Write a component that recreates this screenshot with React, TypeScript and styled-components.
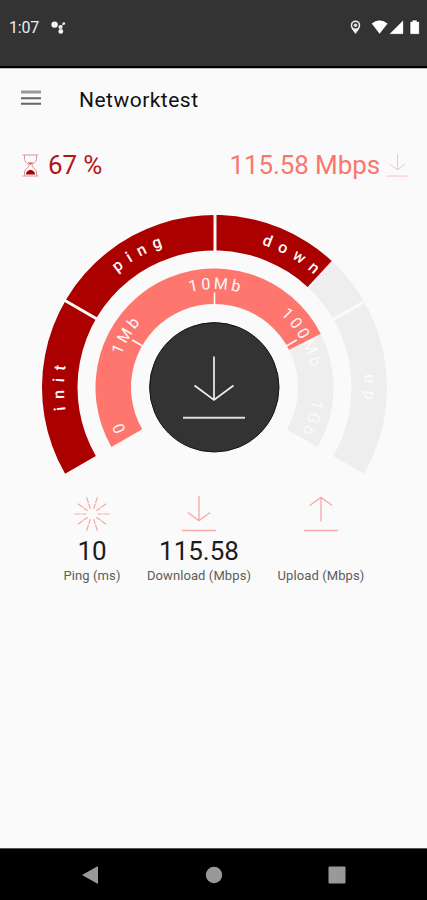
import React from "react";
import styled, { createGlobalStyle } from "styled-components";

const GlobalStyle = createGlobalStyle`
  * { box-sizing: border-box; }
  body { margin: 0; background: #fafafa; font-family: Roboto, "Liberation Sans", sans-serif; }
`;

const CRIMSON = "#ab0000";
const CORAL = "#ff766e";
const TRACK = "#eeeeee";

const Screen = styled.div`
  width: 427px;
  height: 900px;
  display: flex;
  flex-direction: column;
  overflow: hidden;
  background: #fafafa;
`;

const StatusBar = styled.header`
  height: 68px;
  flex: none;
  display: flex;
  align-items: flex-start;
  padding: 17px 7px 0 9px;
  background: #333;
  border-bottom: 2px solid #000;
  box-shadow: 0 1px 0 #bbb;
  color: #eee;
`;

const Clock = styled.span`
  width: 41px;
  font-size: 16px;
  line-height: 22px;
  letter-spacing: -0.2px;
`;

const StatusIcons = styled.div`
  margin-left: auto;
  display: flex;
`;

const AppBar = styled.div`
  height: 64px;
  flex: none;
  display: flex;
  align-items: center;
  padding: 0 21px;
  gap: 38px;
`;

const Title = styled.h1`
  margin: 0;
  font-size: 21px;
  line-height: 28px;
  font-weight: 400;
  letter-spacing: 0.48px;
  color: #111;
`;

const Summary = styled.div`
  height: 66px;
  flex: none;
  display: flex;
  justify-content: space-between;
  align-items: center;
  padding: 0 18px 0 22px;
`;

const Reading = styled.div<{ $color: string; $gap: number }>`
  display: flex;
  align-items: center;
  gap: ${(p) => p.$gap}px;
  font-size: 26px;
  line-height: 32px;
  letter-spacing: -0.1px;
  color: ${(p) => p.$color};
`;

const Dial = styled.svg`
  display: block;
  flex: none;
`;

const RingLabel = styled.text<{ $spacing: number }>`
  font-family: Roboto, sans-serif;
  font-size: 16px;
  letter-spacing: ${(p) => p.$spacing}px;
  fill: #fafafa;
`;

const Results = styled.div`
  display: grid;
  grid-template-columns: 86px 128px 116px;
  padding: 8px 0 0 49px;
`;

const Result = styled.div`
  display: flex;
  flex-direction: column;
  align-items: center;
`;

const ResultIcon = styled.div`
  height: 39px;
  svg {
    display: block;
  }
`;

const ResultValue = styled.div`
  height: 32px;
  font-size: 26px;
  line-height: 32px;
  color: #1c1c1c;
`;

const ResultLabel = styled.div`
  margin-top: 1px;
  font-size: 13px;
  line-height: 16px;
  letter-spacing: 0.1px;
  white-space: nowrap;
  color: #5c5c5c;
`;

const NavBar = styled.nav`
  height: 52px;
  flex: none;
  margin-top: auto;
  display: flex;
  justify-content: center;
  align-items: center;
  gap: 105px;
  background: #000;
  border-top: 1px solid #555;
`;

const C = 172.5;

function polar(r: number, deg: number) {
  const a = (deg * Math.PI) / 180;
  return `${(C + r * Math.sin(a)).toFixed(2)} ${(C - r * Math.cos(a)).toFixed(2)}`;
}

function band(inner: number, outer: number, from: number, to: number) {
  const large = to - from > 180 ? 1 : 0;
  return `M${polar(outer, from)}A${outer} ${outer} 0 ${large} 1 ${polar(outer, to)}L${polar(inner, to)}A${inner} ${inner} 0 ${large} 0 ${polar(inner, from)}Z`;
}

type LabelData = { text: string; angle: number };

const phases: LabelData[] = [
  { text: "init", angle: -90 },
  { text: "ping", angle: -30 },
  { text: "down", angle: 30 },
  { text: "up", angle: 90 },
];

const scale: LabelData[] = [
  { text: "0", angle: -113.3 },
  { text: "1Mb", angle: -60 },
  { text: "10Mb", angle: 0 },
  { text: "100Mb", angle: 60 },
  { text: "1Gb", angle: 107 },
];

function Gauge() {
  return (
    <Dial width="427" height="290" viewBox="-42 -17 427 290">
      <defs>
        <path id="phase-line" d={`M${polar(150.5, -90)}A150.5 150.5 0 0 1 ${polar(150.5, 90)}`} />
        <path id="scale-line" d={`M${polar(98.5, -90)}A98.5 98.5 0 0 1 ${polar(98.5, 90)}`} />
      </defs>
      <path d={band(137, 172.5, -120, 120)} fill={TRACK} />
      <path d={band(137, 172.5, -120, 42.8)} fill={CRIMSON} />
      <path d={band(83.5, 119, -120, 120)} fill={TRACK} />
      <path d={band(83.5, 119, -120, 63.2)} fill={CORAL} />
      {[-60, 0, 60].map((a) => (
        <g key={a} transform={`rotate(${a} ${C} ${C})`} stroke="#fafafa">
          <path d={`M${C + 0.5} -1V36.5`} strokeWidth="3" />
          <path d={`M${C} 77.5V94`} strokeWidth="1.6" />
        </g>
      ))}
      {phases.map((l) => (
        <g key={l.text} transform={`rotate(${l.angle + 1.2} ${C} ${C})`}>
          <RingLabel $spacing={7.4} textAnchor="middle" fontWeight={500}>
            <textPath href="#phase-line" startOffset="50%">{l.text}</textPath>
          </RingLabel>
        </g>
      ))}
      {scale.map((l) => (
        <g key={l.text} transform={`rotate(${l.angle + 0.9} ${C} ${C})`}>
          <RingLabel $spacing={3} textAnchor="middle">
            <textPath href="#scale-line" startOffset="50%">{l.text}</textPath>
          </RingLabel>
        </g>
      ))}
      <circle cx="172.3" cy="172.3" r="64.7" fill="#333" stroke="#111" strokeWidth="1" />
      <path d="M172 141.5V185M152.5 170.5L172 185L191.5 170.5" fill="none" stroke="#eee" strokeWidth="1.7" />
      <path d="M141 202.7H203" stroke="#ddd" strokeWidth="2" />
    </Dial>
  );
}

function Burst() {
  return (
    <svg width="36" height="36" viewBox="-18 -18 36 36" fill="none" stroke="#f7a6a2" strokeWidth="1.2">
      {Array.from({ length: 10 }, (_, i) => (
        <path key={i} d="M5.5 0H10.5M11.3 0H17.5" transform={`rotate(${i * 36})`} />
      ))}
    </svg>
  );
}

function Transfer({ up, size = 36, color = "#f9aaa6" }: { up?: boolean; size?: number; color?: string }) {
  return (
    <svg width={size} height={size} viewBox="0 0 36 36" fill="none" stroke={color} strokeWidth="1.3">
      <path d={up ? "M18 25.5V1M6.8 9.5L18 1.4L29.2 9.5" : "M18 0V25M6.8 16.5L18 24.6L29.2 16.5"} />
      <path d="M1 34.5H35" />
    </svg>
  );
}

function Hourglass() {
  return (
    <svg width="17" height="23" viewBox="0 0 17 23" fill="none" stroke="#d6989c" strokeWidth="1">
      <path d="M0.5 1H16.5M0.5 22H16.5" />
      <path d="M2.5 1V5.5C2.5 8.5 7 9 7 11.5C7 14 2.5 14.5 2.5 18V22M14.5 1V5.5C14.5 8.5 10 9 10 11.5C10 14 14.5 14.5 14.5 18V22" />
      <path d="M5.5 8.6H11.5L8.5 11Z" fill="#c86468" stroke="none" />
      <path d="M4 20.5C4 17.5 6.5 16 8.5 16S13 17.5 13 20.5Z" fill={CRIMSON} stroke="none" />
    </svg>
  );
}

export default function App() {
  return (
    <>
      <GlobalStyle />
      <Screen>
        <StatusBar>
          <Clock>1:07</Clock>
          <svg width="17" height="18" viewBox="0 0 17 18" fill="#f4f4f4">
            <circle cx="4.6" cy="7.6" r="3.2" />
            <circle cx="10.5" cy="10" r="2.1" />
            <circle cx="10.8" cy="14.4" r="2.4" />
            <circle cx="13.8" cy="6.6" r="1.3" />
            <path d="M10 10L14 6.5M10.5 10V14" stroke="#ddd" strokeWidth="1" />
          </svg>
          <StatusIcons>
            <svg width="72" height="22" viewBox="348 17 72 22">
              <path d="M355.5 34.5C353 31 350.3 28.5 350.3 25.2A5.2 5.2 0 0 1 360.7 25.2C360.7 28.5 358 31 355.5 34.5Z" fill="#eee" stroke="#151515" strokeWidth="0.7" />
              <circle cx="355.5" cy="25.3" r="3.2" fill="#333" />
              <circle cx="355.5" cy="25.3" r="1.8" fill="#ddd" />
              <path d="M371.3 23.4Q379.5 16.4 388 23.4L379.6 34.3Z" fill="#fff" stroke="#151515" strokeWidth="0.6" />
              <path d="M403.5 19.8V34.3H389Z" fill="#fff" stroke="#151515" strokeWidth="0.6" />
              <path d="M410 21.5H412.2V20H417V21.5H419.4V34.3H410Z" fill="#fff" stroke="#151515" strokeWidth="0.6" />
            </svg>
          </StatusIcons>
        </StatusBar>
        <AppBar>
          <svg width="20" height="20" viewBox="0 0 20 20">
            <path d="M0 2H20" stroke="#999" strokeWidth="3" />
            <path d="M0 8.2H20M0 13.8H20" stroke="#666" strokeWidth="2" />
          </svg>
          <Title>Networktest</Title>
        </AppBar>
        <Summary>
          <Reading $color="#b3161b" $gap={9}>
            <Hourglass />
            <span>67 %</span>
          </Reading>
          <Reading $color="#fa776e" $gap={6}>
            <span>115.58 Mbps</span>
            <Transfer size={23} color="#fbb6b2" />
          </Reading>
        </Summary>
        <Gauge />
        <Results>
          <Result>
            <ResultIcon><Burst /></ResultIcon>
            <ResultValue>10</ResultValue>
            <ResultLabel>Ping (ms)</ResultLabel>
          </Result>
          <Result>
            <ResultIcon><Transfer /></ResultIcon>
            <ResultValue>115.58</ResultValue>
            <ResultLabel>Download (Mbps)</ResultLabel>
          </Result>
          <Result>
            <ResultIcon><Transfer up /></ResultIcon>
            <ResultValue />
            <ResultLabel>Upload (Mbps)</ResultLabel>
          </Result>
        </Results>
        <NavBar>
          <svg width="18" height="20" viewBox="0 0 18 20"><path d="M0 10L16 1V19Z" fill="#999" /></svg>
          <svg width="18" height="18" viewBox="0 0 18 18"><circle cx="9" cy="9" r="8.2" fill="#999" /></svg>
          <svg width="18" height="18" viewBox="0 0 18 18"><rect x="0.5" y="0.5" width="17" height="17" rx="1" fill="#999" /></svg>
        </NavBar>
      </Screen>
    </>
  );
}
